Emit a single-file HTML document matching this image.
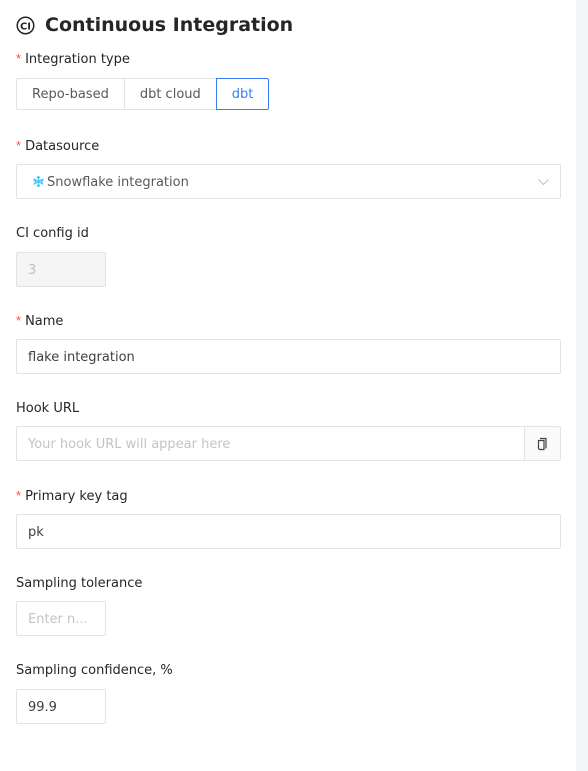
<!DOCTYPE html>
<html><head><meta charset="utf-8"><style>
*{box-sizing:border-box;margin:0;padding:0}
html,body{width:588px;height:771px;background:#fff;overflow:hidden;font-family:"DejaVu Sans","Liberation Sans",sans-serif;font-size:13px;color:#262626}
.strip{position:absolute;left:576px;top:0;width:12px;height:771px;background:#f3f5f7}
.a{position:absolute}
.title{left:16px;top:12px;font-size:19px;font-weight:bold;color:#262626;display:flex;align-items:center;gap:10px;line-height:26px}
.lbl{left:16px;line-height:16px;color:#262626}
.req{color:#ff4d4f;margin-right:4px;font-family:"Liberation Sans",sans-serif}
.inp{left:16px;height:35px;border:1px solid #e3e3e3;border-radius:2px;padding:2px 11px 0;line-height:32px;color:#404040;background:#fff}
.ph{color:#c4c4c4}
.seg{left:16px;top:78px;height:32px;display:flex}
.seg div{border:1px solid #e3e3e3;height:32px;line-height:32px;padding:0 15px;color:#595959;margin-left:-1px}
.seg div:first-child{margin-left:0;border-radius:2px 0 0 2px}
.seg .on{border-color:#3b7cf4;color:#3b7cf4;position:relative;border-radius:0 2px 2px 0}
</style></head><body>
<div class="strip"></div>
<div class="a title"><svg width="19" height="19" viewBox="0 0 20 20"><circle cx="10" cy="10" r="8.7" fill="none" stroke="#262626" stroke-width="1.6"/><text x="10" y="14" text-anchor="middle" font-family="DejaVu Sans" font-size="10.5" fill="#262626">CI</text></svg>Continuous Integration</div>
<div class="a lbl" style="top:51px"><span class="req">*</span>Integration type</div>
<div class="a seg"><div>Repo-based</div><div>dbt cloud</div><div class="on">dbt</div></div>
<div class="a lbl" style="top:138px"><span class="req">*</span>Datasource</div>
<div class="a inp" style="top:164px;width:545px;color:#595959;padding-left:15px">
<svg width="13" height="13" viewBox="0 0 14 14" style="vertical-align:-2px;margin-right:2px"><g stroke="#4cc3ee" stroke-width="1.3" stroke-linecap="round" fill="none"><path d="M7 1.5v11M2.2 4.25l9.6 5.5M2.2 9.75l9.6-5.5"/><path d="M5.6 2.3L7 3.6 8.4 2.3M5.6 11.7L7 10.4 8.4 11.7M2 6l1.8.5-.4 1.8M12 6l-1.8.5.4 1.8"/></g></svg>Snowflake integration
<svg class="a" style="right:11px;top:14px" width="11" height="7" viewBox="0 0 11 7"><path d="M0.5 0.5L5.5 5.5 10.5 0.5" fill="none" stroke="#bfbfbf" stroke-width="1"/></svg></div>
<div class="a lbl" style="top:226px">CI config id</div>
<div class="a inp" style="top:252px;width:90px;background:#f5f5f5;color:#bfbfbf">3</div>
<div class="a lbl" style="top:313px"><span class="req">*</span>Name</div>
<div class="a inp" style="top:339px;width:545px">flake integration</div>
<div class="a lbl" style="top:401px">Hook URL</div>
<div class="a inp" style="top:426px;width:509px;border-radius:2px 0 0 2px"><span class="ph">Your hook URL will appear here</span></div>
<div class="a" style="left:524px;top:426px;width:37px;height:35px;border:1px solid #e3e3e3;background:#fafafa;border-radius:0 2px 2px 0">
<svg class="a" style="left:11px;top:10px" width="13" height="14" viewBox="0 0 13 14"><path d="M4 1.5h6v10M2.5 3.5h5.5v9H3.5L2.5 11.5z" fill="none" stroke="#404040" stroke-width="1.2"/></svg></div>
<div class="a lbl" style="top:488px"><span class="req">*</span>Primary key tag</div>
<div class="a inp" style="top:514px;width:545px">pk</div>
<div class="a lbl" style="top:576px">Sampling tolerance</div>
<div class="a inp" style="top:601px;width:90px"><span class="ph">Enter n...</span></div>
<div class="a lbl" style="top:663px">Sampling confidence, %</div>
<div class="a inp" style="top:689px;width:90px">99.9</div>
</body></html>
